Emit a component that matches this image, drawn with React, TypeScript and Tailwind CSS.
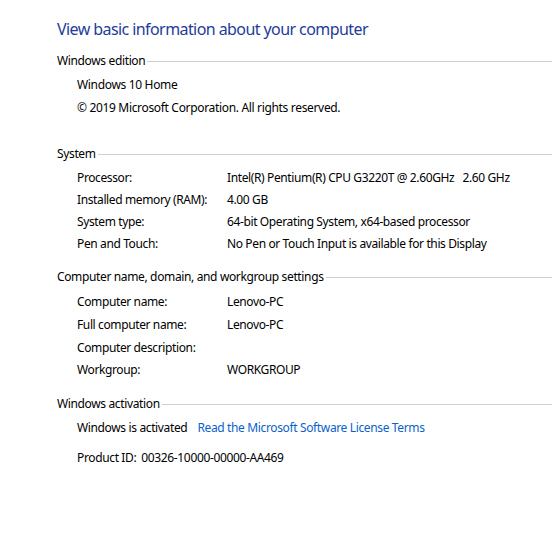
import React from "react";

const font = { fontFamily: '"Segoe UI", "Noto Sans", "Open Sans", sans-serif' };

function SectionHeader({ title, className }: { title: string; className?: string }) {
  return (
    <div className={`flex h-[20px] items-center ${className ?? ""}`}>
      <span className="whitespace-nowrap text-[12px] tracking-[-0.36px] text-black">{title}</span>
      <div className="ml-[2px] h-px flex-1 bg-[#cfcfcf]" />
    </div>
  );
}

function InfoRow({ label, value, h }: { label: string; value?: string; h: string }) {
  return (
    <div className={`flex ${h} items-center pl-[20px] text-[12px] tracking-[-0.38px] text-black`}>
      <span className="w-[150px] shrink-0 whitespace-nowrap">{label}</span>
      <span className="whitespace-pre">{value ?? ""}</span>
    </div>
  );
}

export default function App() {
  return (
    <div className="h-[550px] w-[552px] overflow-hidden bg-white pl-[57px] pt-[18px]" style={font}>
      <div className="flex h-[22px] items-center whitespace-nowrap text-[16px] tracking-[-0.58px] text-[#1e3c9a]">
        View basic information about your computer
      </div>

      <SectionHeader title="Windows edition" className="mt-[11px]" />
      <div className="mt-[2px] flex flex-col text-[12px] tracking-[-0.33px] text-black">
        <div className="flex h-[23px] items-center pl-[20px]">Windows 10 Home</div>
        <div className="flex h-[23px] items-center pl-[20px]">
          © 2019 Microsoft Corporation. All rights reserved.
        </div>
      </div>

      <SectionHeader title="System" className="mt-[25px]" />
      <div className="mt-[3px] flex flex-col">
        <InfoRow h="h-[22px]" label="Processor:" value="Intel(R) Pentium(R) CPU G3220T @ 2.60GHz   2.60 GHz" />
        <InfoRow h="h-[22px]" label="Installed memory (RAM):" value="4.00 GB" />
        <InfoRow h="h-[22px]" label="System type:" value="64-bit Operating System, x64-based processor" />
        <InfoRow h="h-[22px]" label="Pen and Touch:" value="No Pen or Touch Input is available for this Display" />
      </div>

      <SectionHeader title="Computer name, domain, and workgroup settings" className="mt-[12px]" />
      <div className="mt-[3px] flex flex-col">
        <InfoRow h="h-[23px]" label="Computer name:" value="Lenovo-PC" />
        <InfoRow h="h-[23px]" label="Full computer name:" value="Lenovo-PC" />
        <InfoRow h="h-[23px]" label="Computer description:" />
        <InfoRow h="h-[22px]" label="Workgroup:" value="WORKGROUP" />
      </div>

      <SectionHeader title="Windows activation" className="mt-[13px]" />
      <div className="mt-[3px] flex h-[22px] items-center pl-[20px] text-[12px] tracking-[-0.36px]">
        <span className="text-black">Windows is activated</span>
        <span className="ml-[10px] text-[#0a62cc]">Read the Microsoft Software License Terms</span>
      </div>
      <div className="mt-[8px] flex h-[22px] items-center pl-[20px] text-[12px] tracking-[-0.36px] text-black">
        <span>Product ID:</span>
        <span className="ml-[5px]">00326-10000-00000-AA469</span>
      </div>
    </div>
  );
}
